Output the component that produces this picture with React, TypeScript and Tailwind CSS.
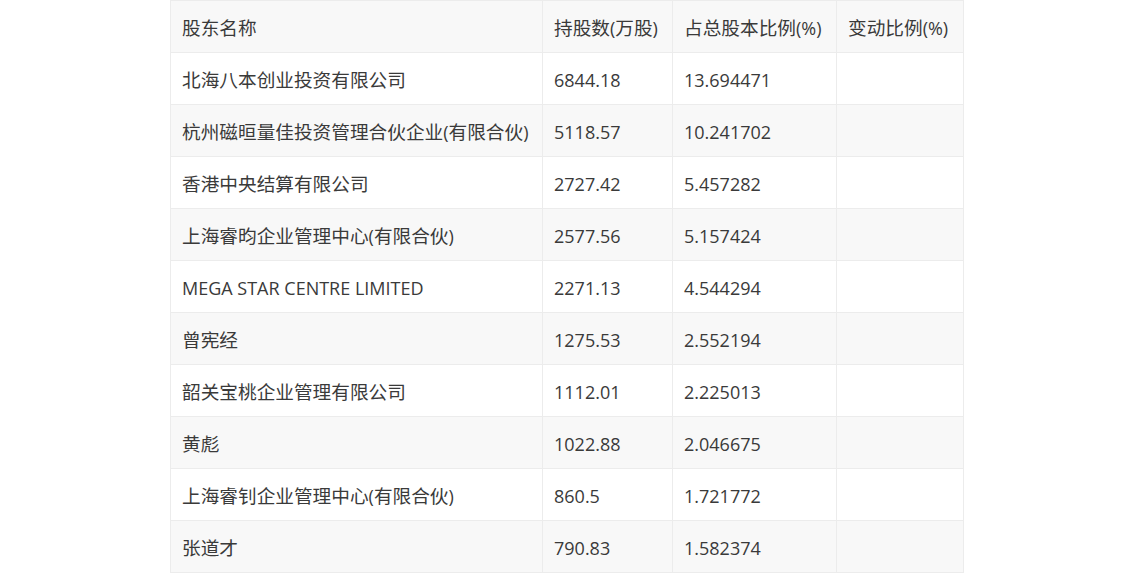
import React from "react";

const rows: [string, string, string, string][] = [
  ["北海八本创业投资有限公司", "6844.18", "13.694471", ""],
  ["杭州磁晅量佳投资管理合伙企业(有限合伙)", "5118.57", "10.241702", ""],
  ["香港中央结算有限公司", "2727.42", "5.457282", ""],
  ["上海睿昀企业管理中心(有限合伙)", "2577.56", "5.157424", ""],
  ["MEGA STAR CENTRE LIMITED", "2271.13", "4.544294", ""],
  ["曾宪经", "1275.53", "2.552194", ""],
  ["韶关宝桃企业管理有限公司", "1112.01", "2.225013", ""],
  ["黄彪", "1022.88", "2.046675", ""],
  ["上海睿钊企业管理中心(有限合伙)", "860.5", "1.721772", ""],
  ["张道才", "790.83", "1.582374", ""],
];

const cell =
  "border border-[#ececec] pl-[11px] pr-[8px] pt-[3px] pb-0 h-[52px] align-middle text-left font-normal whitespace-nowrap leading-[24px]";

function Txt({ s }: { s: string }) {
  const parts = s.split(/([\u4e00-\u9fff]+)/).filter((p) => p.length > 0);
  return (
    <>
      {parts.map((p, i) =>
        /[\u4e00-\u9fff]/.test(p) ? (
          <span key={i} className="text-[18.67px]">
            {p}
          </span>
        ) : (
          <span key={i}>{p}</span>
        )
      )}
    </>
  );
}

export default function App() {
  const head = ["股东名称", "持股数(万股)", "占总股本比例(%)", "变动比例(%)"];
  return (
    <div className="w-[1134px] h-[573px] bg-white overflow-hidden">
      <table
        className="mx-auto border-collapse table-fixed w-[793px] text-[18px] text-[#3a3a3a]"
        style={{ fontFamily: '"Segoe UI", "Open Sans", "Noto Sans CJK SC", sans-serif' }}
      >
        <colgroup>
          <col className="w-[372px]" />
          <col className="w-[130px]" />
          <col className="w-[164px]" />
          <col className="w-[127px]" />
        </colgroup>
        <thead>
          <tr className="bg-[#f8f8f8]">
            {head.map((h, j) => (
              <th key={j} className={cell}>
                <Txt s={h} />
              </th>
            ))}
          </tr>
        </thead>
        <tbody>
          {rows.map((r, i) => (
            <tr key={i} className={i % 2 === 1 ? "bg-[#f8f8f8]" : "bg-white"}>
              {r.map((c, j) => (
                <td key={j} className={cell}>
                  <Txt s={c} />
                </td>
              ))}
            </tr>
          ))}
        </tbody>
      </table>
    </div>
  );
}
